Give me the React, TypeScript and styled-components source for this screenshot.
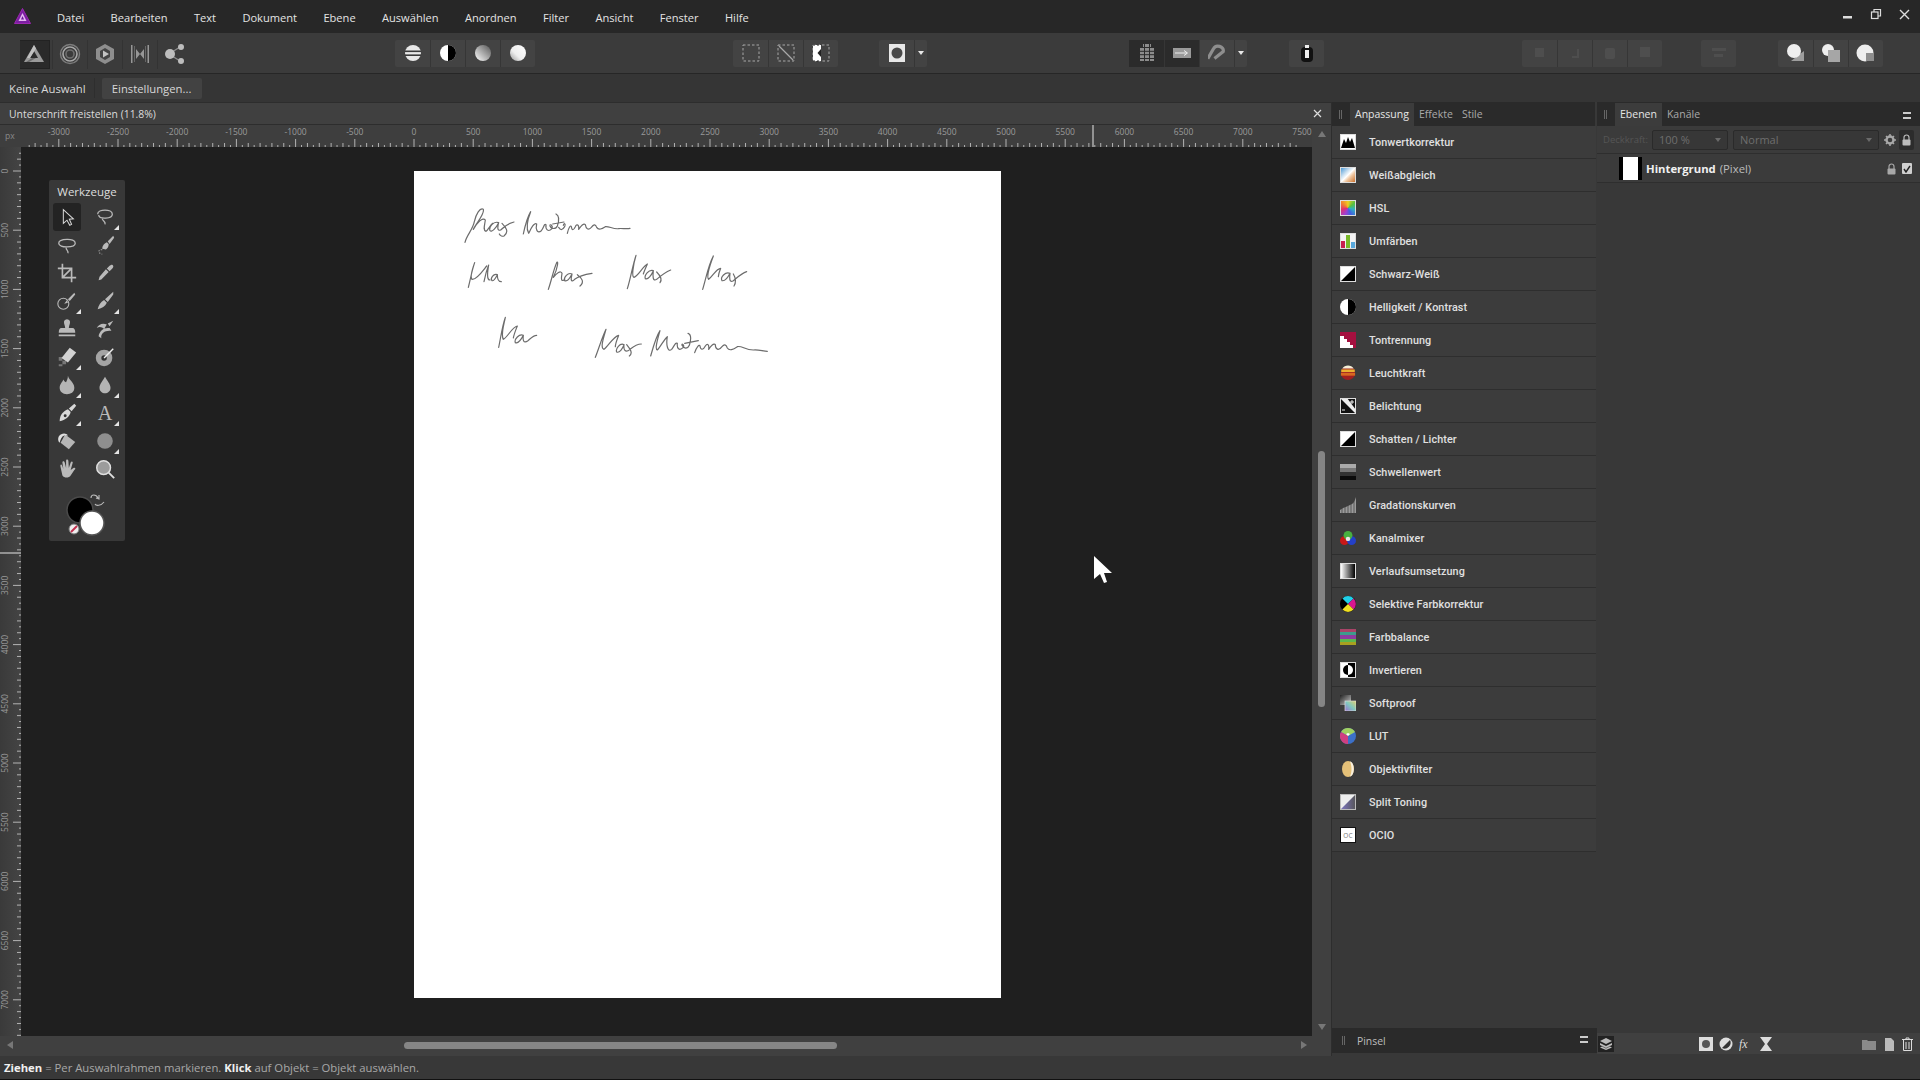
import React from 'react';
import styled, { createGlobalStyle } from 'styled-components';

const GlobalStyle = createGlobalStyle`
	html, body { margin: 0; padding: 0; background: #3a3a3a; overflow: hidden; }
	* { box-sizing: border-box; }
	#root { width: 1920px; height: 1080px; font-family: 'Open Sans', 'Noto Sans', sans-serif; }
`;

const Shell = styled.div`
	display: flex;
	flex-direction: column;
	width: 1920px;
	height: 1080px;
	color: #d8d8d8;
	font-size: 11.5px;
`;

const MenuBar = styled.div`
	display: flex;
	align-items: center;
	height: 33px;
	background: #272727;
	padding-left: 14px;
`;
const LogoWrap = styled.div`
	display: flex;
	width: 43px;
`;
const MenuItems = styled.div`
	display: flex;
	gap: 26.4px;
	padding-top: 1px;
	font-size: 11.1px;
	color: #e4e4e4;
`;
const WindowButtons = styled.div`
	display: flex;
	align-items: center;
	gap: 16px;
	margin-left: auto;
	padding-right: 9px;
	padding-bottom: 5px;
`;

const Toolbar = styled.div`
	display: flex;
	align-items: center;
	height: 41px;
	padding-left: 17px;
	background: #3b3b3b;
	border-bottom: 1px solid #262626;
`;
const Group = styled.div<{ $ml?: number }>`
	display: flex;
	height: 27px;
	margin-left: ${p => p.$ml || 0}px;
	background: #434343;
	border-radius: 2px;
`;
const PlainGroup = styled(Group)`
	background: transparent;
`;
const TBtn = styled.div<{ $state?: 'on' | 'sel'; $narrow?: boolean }>`
	display: flex;
	align-items: center;
	justify-content: center;
	width: ${p => (p.$narrow ? 13 : 35)}px;
	height: 100%;
	background: ${p => (p.$state === 'on' ? '#2b2b2b' : 'transparent')};
	border-left: 1px solid #363636;
	&:first-child { border-left: 0; }
`;
const PersonaBtn = styled.div<{ $active?: boolean }>`
	display: flex;
	align-items: center;
	justify-content: center;
	width: 35px;
	height: 29px;
	border-left: 1px solid #333;
	&:first-child { border-left: 0; }
	${p => p.$active && `
		background: #2a2a2a;
		border: 1px solid #222;
		width: 30px;
		margin: 0 2.5px;
	`}
`;
const Caret = styled.span`
	width: 0;
	height: 0;
	border-left: 3.5px solid transparent;
	border-right: 3.5px solid transparent;
	border-top: 4px solid #e8e8e8;
`;

const ContextBar = styled.div`
	display: flex;
	align-items: center;
	height: 28px;
	background: #353535;
	padding-left: 9px;
	font-size: 11.3px;
`;
const Divider = styled.div`
	width: 1px;
	height: 20px;
	background: #2e2e2e;
	margin: 0 7px 0 8px;
`;
const ContextButton = styled.div`
	display: flex;
	align-items: center;
	justify-content: center;
	width: 100px;
	height: 21px;
	background: #424242;
	border-radius: 2px;
`;

const Workspace = styled.div`
	display: flex;
	flex: 1;
	min-height: 0;
`;
const DocColumn = styled.div`
	display: flex;
	flex-direction: column;
	width: 1331px;
`;
const DocTab = styled.div`
	display: flex;
	align-items: center;
	justify-content: space-between;
	height: 23px;
	padding: 0 9px;
	background: #404040;
	border-top: 1px solid #2d2d2d;
	border-bottom: 1px solid #2d2d2d;
	font-size: 10.4px;
	color: #dcdcdc;
`;
const CenterRow = styled.div`
	display: flex;
	flex: 1;
	min-height: 0;
`;
const RulerColumn = styled.div`
	display: flex;
	flex-direction: column;
	width: 1312px;
`;
const HRuler = styled.svg`
	display: block;
	flex: none;
	background: #3e3e3e;
`;
const CanvasRow = styled.div`
	display: flex;
	flex: 1;
	min-height: 0;
`;
const VRuler = styled.svg`
	display: block;
	flex: none;
	background: linear-gradient(90deg, #3a3a3a, #444);
`;
const Canvas = styled.div`
	position: relative;
	flex: 1;
	padding: 24px 0 0 393px;
	background: #1f1f1f;
	overflow: hidden;
`;
const Page = styled.div`
	width: 587px;
	height: 827px;
	padding: 19px 0 0 26px;
	background: #fff;
`;
const Signatures = styled.svg`
	display: block;
	filter: blur(0.4px);
`;
const Pointer = styled.svg`
	position: absolute;
	left: 1072px;
	top: 408px;
`;

const ToolsPanel = styled.div`
	position: absolute;
	left: 28px;
	top: 33px;
	width: 76px;
	height: 361px;
	background: #383838;
	border-radius: 2px;
`;
const ToolsTitle = styled.div`
	display: flex;
	align-items: center;
	justify-content: center;
	height: 22px;
	font-size: 11.5px;
	color: #dedede;
`;
const ToolGrid = styled.div`
	display: grid;
	grid-template-columns: 38px 38px;
	grid-auto-rows: 28px;
	margin-top: 1px;
`;
const Tool = styled.div<{ $sel?: boolean; $more?: boolean }>`
	position: relative;
	display: flex;
	align-items: center;
	justify-content: center;
	width: 28px;
	height: 28px;
	margin-left: 4px;
	border-radius: 3px;
	background: ${p => (p.$sel ? '#232323' : 'transparent')};
	&::after {
		content: '';
		display: ${p => (p.$more ? 'block' : 'none')};
		position: absolute;
		right: 0;
		bottom: 1px;
		border-left: 5px solid transparent;
		border-bottom: 5px solid #e4e4e4;
	}
`;

const VScroll = styled.div`
	display: flex;
	flex-direction: column;
	align-items: center;
	width: 19px;
	padding-top: 6px;
	background: #404040;
`;
const VThumb = styled.div`
	width: 7px;
	height: 256px;
	margin-top: 314px;
	border-radius: 4px;
	background: #858585;
`;
const DownArrow = styled.div`
	margin-top: 317px;
	border-left: 4px solid transparent;
	border-right: 4px solid transparent;
	border-top: 6px solid #777;
`;
const UpArrow = styled.div`
	border-left: 4px solid transparent;
	border-right: 4px solid transparent;
	border-bottom: 6px solid #777;
`;
const HScroll = styled.div`
	display: flex;
	align-items: center;
	height: 20px;
	padding: 0 0 2px 7px;
	background: #404040;
`;
const LeftArrow = styled.div`
	border-top: 4px solid transparent;
	border-bottom: 4px solid transparent;
	border-right: 6px solid #777;
`;
const RightArrow = styled.div`
	margin-left: 464px;
	border-top: 4px solid transparent;
	border-bottom: 4px solid transparent;
	border-left: 6px solid #777;
`;
const HThumb = styled.div`
	width: 433px;
	height: 7px;
	margin-left: 391px;
	border-radius: 4px;
	background: #858585;
`;

const SidePanels = styled.div`
	display: flex;
	flex: 1;
	background: #383838;
	border-left: 1px solid #2d2d2d;
`;
const AdjustColumn = styled.div`
	display: flex;
	flex-direction: column;
	width: 265px;
	padding-bottom: 3px;
`;
const LayersColumn = styled.div`
	display: flex;
	flex-direction: column;
	flex: 1;
	padding-bottom: 2px;
`;
const TabBar = styled.div<{ $mr?: number }>`
	display: flex;
	align-items: flex-end;
	height: 24px;
	background: #2a2a2a;
	padding-left: 7px;
	margin-right: ${p => p.$mr || 0}px;
	font-size: 10.5px;
	color: #a9a9a9;
`;
const Grip = styled.span`
	width: 3px;
	height: 9px;
	margin: 0 8px 7px 0;
	border-left: 1px solid #666;
	border-right: 1px solid #666;
`;
const Tab = styled.div<{ $on?: boolean }>`
	display: flex;
	align-items: center;
	height: 23px;
	padding: 0 ${p => (p.$on ? 5 : 4)}px 2px;
	margin-right: 1px;
	background: ${p => (p.$on ? '#3c3c3c' : 'transparent')};
	color: ${p => (p.$on ? '#e6e6e6' : '#a9a9a9')};
`;
const MenuGlyph = styled.div`
	margin-left: auto;
	margin-right: 9px;
	margin-bottom: 7px;
	width: 8px;
	height: 7px;
	border-top: 2px solid #ccc;
	border-bottom: 2px solid #ccc;
`;
const AdjustList = styled.div`
	display: flex;
	flex-direction: column;
	margin-right: 1px;
`;
const AdjustRow = styled.div`
	display: flex;
	align-items: center;
	height: 33px;
	padding-left: 8px;
	background: #3c3c3c;
	border-bottom: 1px solid #2e2e2e;
	font-family: Roboto, 'Open Sans', sans-serif;
	font-size: 10.8px;
	font-weight: 500;
	letter-spacing: 0.1px;
	color: #e0e0e0;
`;
const Swatch = styled.div<{ $bg: string; $round?: boolean; $plain?: boolean }>`
	width: 16px;
	height: 16px;
	background: ${p => p.$bg};
	border-radius: ${p => (p.$round ? '50%' : '0')};
	border: ${p => (p.$round || p.$plain ? 'none' : '1px solid #ddd')};
`;
const IconSlot = styled.div`
	display: flex;
	align-items: center;
	justify-content: center;
	width: 16px;
	height: 16px;
	margin-right: 13px;
`;
const BrushBar = styled.div`
	display: flex;
	align-items: center;
	height: 25px;
	margin-top: auto;
	padding-left: 10px;
	background: #2a2a2a;
	font-size: 10.4px;
	color: #bdbdbd;
`;
const BrushGrip = styled.span`
	width: 3px;
	height: 9px;
	margin-right: 12px;
	border-left: 1px solid #666;
	border-right: 1px solid #666;
`;
const BrushMenu = styled(MenuGlyph)`
	margin-bottom: 2px;
	margin-right: 9px;
`;

const OpacityRow = styled.div`
	display: flex;
	align-items: center;
	height: 28px;
	padding-left: 6px;
	border-bottom: 1px solid #2e2e2e;
	background: #3b3b3b;
`;
const DimLabel = styled.span`
	width: 49px;
	font-size: 9.5px;
	color: #555;
	white-space: nowrap;
	overflow: hidden;
`;
const SelectBox = styled.div<{ $w: number }>`
	display: flex;
	align-items: center;
	justify-content: space-between;
	width: ${p => p.$w}px;
	height: 20px;
	margin-right: 5px;
	padding: 0 6px;
	background: #373737;
	border: 1px solid #2a2a2a;
	border-radius: 2px;
	font-size: 11px;
	color: #6e6e6e;
`;
const DimCaret = styled(Caret)`
	border-top-color: #6a6a6a;
`;
const LockBox = styled.div`
	display: flex;
	align-items: center;
	justify-content: center;
	width: 15px;
	height: 20px;
	margin-left: 3px;
	background: #2c2c2c;
	border-radius: 2px;
`;
const LayerRow = styled.div`
	display: flex;
	align-items: center;
	height: 29px;
	padding: 1px 0 0 22px;
	background: #3b3b3b;
	border-bottom: 1px solid #2e2e2e;
	font-size: 11.3px;
	color: #bbb;
`;
const Thumb = styled.div`
	width: 23px;
	height: 23px;
	padding: 0 4px;
	margin-right: 4px;
	background: #000;
`;
const ThumbPage = styled.div`
	height: 100%;
	background: #fff;
`;
const LayerName = styled.b`
	color: #f0f0f0;
	font-weight: 700;
	margin-right: 4px;
`;
const LayerTools = styled.div`
	display: flex;
	align-items: center;
	gap: 6px;
	margin-left: auto;
	padding-right: 8px;
`;
const CheckBox = styled.div`
	display: flex;
	align-items: center;
	justify-content: center;
	width: 10px;
	height: 11px;
	background: #cfcfcf;
	border-radius: 1px;
`;
const LayerFooter = styled.div`
	display: flex;
	align-items: center;
	height: 21px;
	margin-top: auto;
	padding-left: 1px;
	background: #404040;
`;
const StackBox = styled.div`
	display: flex;
	align-items: center;
	justify-content: center;
	width: 16px;
	height: 16px;
	margin-right: 85px;
	background: #222;
`;
const FooterIcons = styled.div<{ $ml?: number }>`
	display: flex;
	align-items: center;
	gap: 6px;
	margin-left: ${p => p.$ml || 0}px;
`;
const StatusBar = styled.div`
	height: 24px;
	padding: 4px 0 0 4px;
	background: #383838;
	border-bottom: 1px solid #111;
	font-size: 11.3px;
	color: #a8a8a8;
`;
const StatusKey = styled.b`
	color: #f0f0f0;
`;

const MENU = ['Datei', 'Bearbeiten', 'Text', 'Dokument', 'Ebene', 'Auswählen', 'Anordnen', 'Filter', 'Ansicht', 'Fenster', 'Hilfe'];

const STEP = 59.2;

function TopRuler() {
	const ticks = [];
	for (let i = -65; i < 150; i++) {
		const x = 414 + (i * STEP) / 10;
		if (x < 22 || x > 1308) continue;
		const h = i % 10 === 0 ? 8 : i % 2 === 0 ? 4 : 2;
		ticks.push(<line key={i} x1={x} x2={x} y1={22} y2={22 - h} stroke='#d0d0d0' strokeWidth={0.8} />);
	}
	const labels = [];
	for (let n = -3000; n <= 7500; n += 500) {
		labels.push(
			<text key={n} x={414 + (n / 500) * STEP} y={10} textAnchor='middle' fontSize={8.5} fill='#9a9a9a' fontFamily='Open Sans'>
				{n}
			</text>
		);
	}
	return (
		<HRuler width={1312} height={22}>
			<text x={5} y={14} fontSize={8.5} fill='#8a8a8a' fontFamily='Open Sans'>
				px
			</text>
			{ticks}
			{labels}
			<line x1={1093} x2={1093} y1={0} y2={22} stroke='#e6e6e6' strokeWidth={1} />
		</HRuler>
	);
}

function LeftRuler() {
	const ticks = [];
	for (let i = -3; i < 150; i++) {
		const y = 24 + (i * STEP) / 10;
		const w = i % 10 === 0 ? 8 : i % 2 === 0 ? 4 : 2;
		ticks.push(<line key={i} x1={21} x2={21 - w} y1={y} y2={y} stroke='#d0d0d0' strokeWidth={0.8} />);
	}
	const labels = [];
	for (let n = 0; n <= 7000; n += 500) {
		const y = 24 + (n / 500) * STEP;
		labels.push(
			<text key={n} x={8} y={y} textAnchor='middle' fontSize={8.5} fill='#9a9a9a' fontFamily='Open Sans' transform={`rotate(-90 8 ${y})`}>
				{n}
			</text>
		);
	}
	return (
		<VRuler width={21} height={889}>
			{ticks}
			{labels}
			<line x1={0} x2={21} y1={406} y2={406} stroke='#e6e6e6' strokeWidth={1} />
		</VRuler>
	);
}

function Logo() {
	return (
		<svg width={17} height={17} viewBox='0 0 17 17'>
			<path d='M8.5 0.5 L16.5 15.5 L0.5 15.5 Z' fill='#7b1fa2' stroke='#9c27b0' />
			<path d='M8.5 5 L12.5 13 L4.5 13 Z' fill='#e6b8f2' />
			<path d='M8.5 8 L10 11.5 L7 11.5 Z' fill='#6a1b9a' />
		</svg>
	);
}

function WinControls() {
	return (
		<WindowButtons>
			<svg width={13} height={12} viewBox='0 0 13 12'>
				<rect x={2} y={8} width={9} height={2.5} fill='#ddd' />
			</svg>
			<svg width={12} height={12} viewBox='0 0 12 12' fill='none' stroke='#ddd' strokeWidth={1.2}>
				<rect x={1.5} y={4} width={6.5} height={6.5} />
				<path d='M4 4 V1.5 H10.5 V8 H8' />
			</svg>
			<svg width={13} height={13} viewBox='0 0 13 13' stroke='#ddd' strokeWidth={1.4}>
				<path d='M2 2 L11 11 M11 2 L2 11' />
			</svg>
		</WindowButtons>
	);
}

const PERSONAS = [
	<svg key='p' width={22} height={22} viewBox='0 0 22 22'>
		<path d='M11 2 L21 19 H1 Z' fill='#9a9a9a' />
		<path d='M11 8 L15 15 H7 Z' fill='#2a2a2a' />
		<path d='M3 19 L9 15 H13 L6 19 Z' fill='#6d6d6d' />
		<path d='M11 2 L13 5.5 L7 15 L4 15 Z' fill='#c0c0c0' />
	</svg>,
	<svg key='l' width={22} height={22} viewBox='0 0 22 22' fill='none'>
		<circle cx={11} cy={11} r={9.5} stroke='#7d7d7d' strokeWidth={1.4} />
		<circle cx={11} cy={11} r={7} stroke='#a8a8a8' strokeWidth={1.6} />
		<circle cx={11} cy={11} r={4} stroke='#6f6f6f' strokeWidth={1.6} />
	</svg>,
	<svg key='d' width={22} height={22} viewBox='0 0 22 22'>
		<path d='M11 1 L20 6 V16 L11 21 L2 16 V6 Z' fill='#8e8e8e' />
		<path d='M11 5 L16 8 V14 L11 17 L6 14 V8 Z' fill='#444' />
		<path d='M9 7.5 L15 11 L9 14.5 Z' fill='#c4c4c4' />
	</svg>,
	<svg key='t' width={22} height={22} viewBox='0 0 22 22' fill='#979797'>
		<rect x={2} y={2} width={1.5} height={18} />
		<rect x={18.5} y={2} width={1.5} height={18} />
		<rect x={5} y={3} width={1} height={16} fill='#666' />
		<rect x={16} y={3} width={1} height={16} fill='#666' />
		<path d='M7 6 L11 11 L7 16 Z M15 6 L11 11 L15 16 Z' />
	</svg>,
	<svg key='e' width={22} height={22} viewBox='0 0 22 22' fill='#bdbdbd'>
		<path d='M5 11 L16 4 M5 11 L16 18' stroke='#8c8c8c' strokeWidth={1.4} />
		<circle cx={6} cy={11} r={5} />
		<circle cx={17} cy={4} r={3} />
		<circle cx={17} cy={18} r={3} />
	</svg>
];

function Circle({ fill, children }: { fill: string; children?: React.ReactNode }) {
	return (
		<svg width={18} height={18} viewBox='0 0 18 18'>
			<defs>
				<linearGradient id='gm' x1='1' y1='0' x2='0' y2='1'>
					<stop offset='0' stopColor='#555' />
					<stop offset='1' stopColor='#fff' />
				</linearGradient>
				<linearGradient id='gl' x1='1' y1='0' x2='0' y2='1'>
					<stop offset='0' stopColor='#fff' />
					<stop offset='0.6' stopColor='#eee' />
					<stop offset='1' stopColor='#999' />
				</linearGradient>
			</defs>
			<circle cx={9} cy={9} r={8} fill={fill} />
			{children}
		</svg>
	);
}

function DashBox({ children }: { children?: React.ReactNode }) {
	return (
		<svg width={18} height={20} viewBox='0 0 18 20' fill='none'>
			<rect x={1} y={2} width={16} height={16} stroke='#a8a8a8' strokeDasharray='2.5 2' />
			{children}
		</svg>
	);
}

function Shapes({ a, b }: { a: React.ReactNode; b: React.ReactNode }) {
	return (
		<svg width={20} height={20} viewBox='0 0 20 20'>
			{b}
			{a}
		</svg>
	);
}

function Dim({ children }: { children: React.ReactNode }) {
	return (
		<svg width={16} height={16} viewBox='0 0 16 16' fill='#4e4e4e'>
			{children}
		</svg>
	);
}

function Tone() {
	return (
		<>
			<Group $ml={203}>
				<TBtn>
					<Circle fill='#e8e8e8'>
						<rect x={1} y={6.5} width={16} height={1.6} fill='#3a3a3a' />
						<rect x={1} y={10.4} width={16} height={1.6} fill='#3a3a3a' />
					</Circle>
				</TBtn>
				<TBtn>
					<Circle fill='#fff'>
						<path d='M9 1 A8 8 0 0 1 9 17 Z' fill='#000' />
					</Circle>
				</TBtn>
				<TBtn>
					<Circle fill='url(#gm)' />
				</TBtn>
				<TBtn>
					<Circle fill='url(#gl)' />
				</TBtn>
			</Group>
			<Group $ml={198}>
				<TBtn>
					<DashBox />
				</TBtn>
				<TBtn>
					<DashBox>
						<path d='M2 3 L16 17' stroke='#a8a8a8' strokeWidth={1.2} />
					</DashBox>
				</TBtn>
				<TBtn>
					<DashBox>
						<rect x={1} y={2} width={8} height={16} fill='#fff' />
						<path d='M9 6 L5.5 10 L9 14 Z' fill='#222' />
						<path d='M1 2 h2 M5 2 h2 M1 18 h2 M5 18 h2' stroke='#222' />
					</DashBox>
				</TBtn>
			</Group>
			<Group $ml={41}>
				<TBtn>
					<svg width={16} height={18} viewBox='0 0 16 18'>
						<rect width={16} height={18} fill='#e8e8e8' />
						<circle cx={8} cy={9} r={5.5} fill='#4a4a4a' />
					</svg>
				</TBtn>
				<TBtn $narrow>
					<Caret />
				</TBtn>
			</Group>
			<Group $ml={202}>
				<TBtn $state='on'>
					<svg width={16} height={20} viewBox='0 0 16 20' fill='#8c8c8c'>
						<path d='M4 1 h8 v3 h-8 z M1 5 h14 v10 h-14 z M1 16 h14 v2 h-14 z' />
						<path d='M5.5 1 v17 M10.5 1 v17 M1 8.3 h14 M1 11.7 h14' stroke='#2b2b2b' />
					</svg>
				</TBtn>
				<TBtn $state='on'>
					<svg width={18} height={10} viewBox='0 0 18 10'>
						<rect width={18} height={10} fill='#9a9a9a' />
						<path d='M2 5 H14 M11 2.5 L14.5 5 L11 7.5' stroke='#eee' fill='none' />
					</svg>
				</TBtn>
				<TBtn>
					<svg width={18} height={22} viewBox='0 0 18 22' fill='none'>
						<path d='M3 20 L4 9 C4 3 13 2 14 7 L9 17' stroke='#8e8e8e' strokeWidth={3.2} transform='rotate(25 9 11)' />
					</svg>
				</TBtn>
				<TBtn $narrow>
					<Caret />
				</TBtn>
			</Group>
			<Group $ml={42}>
				<TBtn>
					<svg width={14} height={20} viewBox='0 0 14 20'>
						<rect x={1} y={4} width={12} height={15} rx={4} fill='#111' />
						<rect x={5} y={7} width={4} height={8} fill='#eee' />
						<rect x={5} y={2} width={4} height={3} fill='#eee' />
					</svg>
				</TBtn>
			</Group>
			<Group $ml={198}>
				<TBtn>
					<Dim>
						<rect x={3} y={3} width={9} height={9} />
					</Dim>
				</TBtn>
				<TBtn>
					<Dim>
						<path d='M10 4 h2 v9 h-7 v-2 h5 z' />
					</Dim>
				</TBtn>
				<TBtn>
					<Dim>
						<rect x={3} y={3} width={10} height={11} rx={2} />
					</Dim>
				</TBtn>
				<TBtn>
					<Dim>
						<rect x={3} y={2} width={10} height={10} />
					</Dim>
				</TBtn>
			</Group>
			<Group $ml={39}>
				<TBtn>
					<Dim>
						<path d='M1 3 h14 v3 h-14 z M3 9 h9 v3 h-9 z' />
					</Dim>
				</TBtn>
			</Group>
			<Group $ml={42}>
				<TBtn>
					<Shapes
						a={<circle cx={8} cy={8} r={7} fill='#eee' />}
						b={<path d='M5 18 L18 18 L18 8 Z' fill='#9d9d9d' />}
					/>
				</TBtn>
				<TBtn>
					<Shapes
						a={<rect x={7} y={7} width={12} height={12} fill='#a6a6a6' />}
						b={<circle cx={7} cy={7} r={6} fill='#eee' />}
					/>
				</TBtn>
				<TBtn>
					<Shapes
						a={<path d='M10 10 H18 V18 H10 Z' fill='#8e8e8e' />}
						b={<circle cx={9} cy={10} r={8.5} fill='#eee' />}
					/>
				</TBtn>
			</Group>
		</>
	);
}

const T = '#bababa';
const TOOLS: { icon: React.ReactNode; more?: boolean; sel?: boolean }[] = [
	{ sel: true, icon: <path d='M8 4 L8 19 L12 15.5 L15 21 L17 20 L14.5 14.5 L19 14 Z' fill='#222' stroke='#d8d8d8' strokeWidth={1.1} /> },
	{ more: true, icon: <path d='M4 9 C4 3 20 3 20 9 C20 14 6 15 5 10 M9 14 C10 17 13 17 12 20' fill='none' stroke={T} strokeWidth={1.4} /> },
	{ icon: <path d='M3 10 C3 5 21 4 21 10 C21 15 3 16 3 10 M11 15 C11 18 14 18 13 21' fill='none' stroke={T} strokeWidth={1.4} /> },
	{ icon: <><path d='M21 2 L15 8 L17 11 L22 4 Z M14 9 C10 11 9 14 9 16 L13 17 C16 15 16 12 16 11 Z' fill={T} /><path d='M9 17 C4 17 4 21 9 22' fill='none' stroke='#999' strokeWidth={1.2} strokeDasharray='1.5 1.5' /></> },
	{ icon: <path d='M7 2 V17 H22 M2 7 H17 V22 M7 17 L17 7' fill='none' stroke={T} strokeWidth={1.8} /> },
	{ icon: <path d='M19 3 C21 3 22 5 20 7 L17 10 L14 7 L17 4 Z M13 8 L16 11 L8 19 L5 20 L6 16 Z' fill={T} /> },
	{ more: true, icon: <><circle cx={8} cy={15} r={6} fill='none' stroke={T} strokeWidth={1.2} /><path d='M20 3 L13 10 L15 12 L21 5 Z M12 11 L9 15 L13 14 Z' fill={T} /></> },
	{ more: true, icon: <path d='M21 2 L12 10 L15 13 L21 5 Z M11 11 C7 13 5 17 4 21 C9 20 12 18 14 14 Z' fill={T} /> },
	{ icon: <path d='M9 3 A3.5 3.5 0 0 1 15 3 C16 6 14 8 14 11 H18 C20 11 21 13 21 16 H3 C3 13 4 11 6 11 H10 C10 8 8 6 9 3 Z M3 18 H21 V20 H3 Z' fill={T} /> },
	{ icon: <path d='M21 3 L15 6 L17 9 Z M14 7 C9 5 5 7 3 11 C6 9 9 10 11 12 M8 22 C7 16 13 13 19 14 L17 11 C11 10 6 14 5 20 Z' fill={T} /> },
	{ more: true, icon: <><path d='M3 12 h4 v4 h-4 z M7 16 h4 v4 h-4 z M11 12 h2 v4 h-2 z M3 20 h4 v2 h-4 z' fill='#777' /><path d='M15 2 L22 7 L13 18 L6 13 Z' fill='#d2d2d2' /></> },
	{ icon: <><circle cx={11} cy={13} r={9} fill='#a4a4a4' /><circle cx={11} cy={13} r={3} fill='#333' /><path d='M11 13 L21 3' stroke='#eee' strokeWidth={1.6} /></> },
	{ more: true, icon: <path d='M13 2 C14 7 20 9 20 15 C20 20 16 22 12 22 C7 22 4 19 4 15 C4 11 7 9 8 6 C9 8 10 9 11 9 C12 7 13 5 13 2 Z' fill='#b4b4b4' /> },
	{ more: true, icon: <path d='M12 3 C14 7 18 11 18 15 C18 19 15 21 12 21 C9 21 6 19 6 15 C6 11 10 7 12 3 Z' fill='#b4b4b4' /> },
	{ more: true, icon: <><path d='M4 21 C4 14 8 10 13 8 L16 11 C15 16 10 20 4 21 Z' fill='#d8d8d8' /><path d='M14 7 L20 2 L22 4 L17 10 Z' fill='#d8d8d8' /><circle cx={10} cy={15} r={1.6} fill='#333' /></> },
	{ more: true, icon: <text x={12} y={20} textAnchor='middle' fontFamily='Liberation Serif, serif' fontSize={22} fill={T}>A</text> },
	{ icon: <><path d='M10 5 L21 13 L14 21 L5 14 Z' fill='#b6b6b6' /><path d='M3 7 C6 3 11 3 13 6 L9 6 C6 7 5 10 4 14 C2 12 2 9 3 7 Z' fill='#dedede' /></> },
	{ more: true, icon: <circle cx={12} cy={12} r={8.5} fill='#8e8e8e' /> },
	{ icon: <path d='M5 10 C4 7 6 6 7 9 L8 12 L7 5 C7 3 9 3 9.5 5 L11 11 L11 3 C11 1 13 1 13.5 3 L14 11 L16 5 C17 3 19 4 18 6 L16 13 L19 11 C21 10 22 12 20 13 L16 19 C14 22 9 22 7 19 Z' fill={T} /> },
	{ icon: <><circle cx={10.5} cy={10.5} r={7.5} fill='#9c9c9c' stroke='#e0e0e0' strokeWidth={1.6} /><path d='M16 16 L22 22' stroke='#e0e0e0' strokeWidth={2} /></> }
];

function ColorWell() {
	return (
		<svg width={76} height={58} viewBox='0 0 76 58'>
			<path d='M45 16 C45 12 50 12 52 16 M50 16 L53 17 L53 13 M58 20 C55 24 50 24 49 22' fill='none' stroke='#bbb' strokeWidth={1.1} transform='translate(-3 -1)' />
			<circle cx={31} cy={27} r={13} fill='#000' stroke='#4a4a4a' strokeWidth={1.5} />
			<circle cx={43} cy={40} r={12} fill='#fff' stroke='#555' strokeWidth={1.5} />
			<circle cx={25} cy={46} r={5} fill='#eee' stroke='#777' />
			<path d='M22 49 L28 43' stroke='#c2304f' strokeWidth={2} />
		</svg>
	);
}

const EDGE = '#ddd';
function Box({ children }: { children: React.ReactNode }) {
	return (
		<svg width={16} height={16} viewBox='0 0 16 16'>
			{children}
			<rect x={0.5} y={0.5} width={15} height={15} fill='none' stroke={EDGE} />
		</svg>
	);
}

const ADJUST: { name: string; icon: React.ReactNode }[] = [
	{ name: 'Tonwertkorrektur', icon: <Box><rect width={16} height={16} fill='#fff' /><path d='M1 14 L4 5 L6 9 L8 3 L10 8 L12 4 L15 14 Z' fill='#000' /></Box> },
	{ name: 'Weißabgleich', icon: <Swatch $bg='linear-gradient(135deg, #4d9ad6 0%, #cfe3f2 35%, #fff 50%, #f0c9a4 65%, #c9702c 100%)' /> },
	{ name: 'HSL', icon: <Swatch $bg='conic-gradient(#f0d020, #58c040, #30b0c0, #4060e0, #a040d0, #e03070, #f08030, #f0d020)' /> },
	{ name: 'Umfärben', icon: <Box><rect width={16} height={16} fill='#f4f4f4' /><rect x={1} y={8} width={4} height={7} fill='#c81e50' /><rect x={6} y={2} width={4} height={13} fill='#78b828' /><rect x={11} y={9} width={4} height={6} fill='#58a8dc' /></Box> },
	{ name: 'Schwarz-Weiß', icon: <Box><rect width={16} height={16} fill='#fff' /><path d='M16 0 V16 H0 Z' fill='#000' /></Box> },
	{ name: 'Helligkeit / Kontrast', icon: <svg width={16} height={16} viewBox='0 0 16 16'><circle cx={8} cy={8} r={8} fill='#fff' /><path d='M8 0 A8 8 0 0 1 8 16 Z' fill='#000' /></svg> },
	{ name: 'Tontrennung', icon: <svg width={16} height={16} viewBox='0 0 16 16'><rect width={16} height={16} fill='#fff' /><path d='M0 0 H16 V16 H13 V13 H10 V10 H7 V7 H4 V4 H0 Z' fill='#a5103f' /></svg> },
	{ name: 'Leuchtkraft', icon: <svg width={18} height={16} viewBox='0 0 18 16'><circle cx={9} cy={8} r={8} fill='#a02020' /><path d='M2.5 3 H15.5 A8 8 0 0 0 2.5 3 Z' fill='#f4f0d8' /><rect x={1.4} y={4} width={15.2} height={3} fill='#eab030' /><rect x={1} y={8} width={16} height={3} fill='#d86820' /></svg> },
	{ name: 'Belichtung', icon: <Box><rect width={16} height={16} fill='#111' /><path d='M0 0 H7 L16 12 V16 Z' fill='#eee' /><path d='M10 4 h4 M12 2 v4' stroke='#eee' /><path d='M2 12 h3' stroke='#eee' /></Box> },
	{ name: 'Schatten / Lichter', icon: <Box><rect width={16} height={16} fill='#fff' /><path d='M16 0 V16 H0 Z' fill='#000' /></Box> },
	{ name: 'Schwellenwert', icon: <Swatch $plain $bg='linear-gradient(180deg, #aaa 0 28%, #777 28% 52%, #333 52% 72%, #0c0c0c 72%)' /> },
	{ name: 'Gradationskurven', icon: <svg width={16} height={16} viewBox='0 0 16 16'><path d='M0 16 V13 C4 10 9 9 12 7 C14 6 15 3 16 0 V16 Z' fill='#9a9a9a' /><path d='M2 9 V16 M5 9 V16 M8 8 V16 M11 6 V16 M14 3 V16' stroke='#3c3c3c' strokeWidth={0.7} /></svg> },
	{ name: 'Kanalmixer', icon: <svg width={18} height={16} viewBox='0 0 18 16'><circle cx={5} cy={11} r={5} fill='#c81818' /><circle cx={13} cy={11} r={5} fill='#2440c8' /><circle cx={9} cy={5} r={5} fill='#48b040' /><circle cx={9} cy={9} r={2.5} fill='#e8e8e8' /></svg> },
	{ name: 'Verlaufsumsetzung', icon: <Swatch $bg='linear-gradient(90deg, #fff, #000)' /> },
	{ name: 'Selektive Farbkorrektur', icon: <svg width={16} height={16} viewBox='0 0 16 16'><circle cx={8} cy={8} r={8} fill='#000' /><path d='M8 8 L2.4 2.4 A8 8 0 0 1 13.6 2.4 Z' fill='#20d0e8' /><path d='M8 8 L13.6 2.4 A8 8 0 0 1 13.6 13.6 Z' fill='#d81890' /><path d='M8 8 L13.6 13.6 A8 8 0 0 1 2.4 13.6 Z' fill='#f0e020' /></svg> },
	{ name: 'Farbbalance', icon: <Swatch $plain $bg='linear-gradient(180deg, #a84468 0 20%, #3c9c8c 20% 40%, #8c3ca0 40% 60%, #5cb84c 60% 80%, #a8a020 80%)' /> },
	{ name: 'Invertieren', icon: <Box><rect width={16} height={16} fill='#fff' /><rect x={8} width={8} height={16} fill='#000' /><path d='M8 3 A5 5 0 0 0 8 13 Z' fill='#000' /><path d='M8 3 A5 5 0 0 1 8 13 Z' fill='#fff' /></Box> },
	{ name: 'Softproof', icon: <svg width={16} height={16} viewBox='0 0 16 16'><defs><linearGradient id='sp1' x1='0' y1='0' x2='1' y2='1'><stop offset='0' stopColor='#222' /><stop offset='1' stopColor='#ccc' /></linearGradient><linearGradient id='sp2' x1='0' y1='1' x2='1' y2='0'><stop offset='0' stopColor='#9a70d0' /><stop offset='0.5' stopColor='#80c8c0' /><stop offset='1' stopColor='#e0d070' /></linearGradient></defs><rect width={11} height={10} fill='url(#sp1)' /><rect x={5} y={6} width={11} height={10} fill='url(#sp2)' stroke='#ddd' strokeWidth={0.7} /></svg> },
	{ name: 'LUT', icon: <svg width={16} height={16} viewBox='0 0 16 16'><circle cx={8} cy={8} r={8} fill='#3c70c8' /><path d='M8 0 A8 8 0 0 1 15 4 L8 8 L1 4 A8 8 0 0 1 8 0 Z' fill='#a0d060' /><path d='M1 4 L8 8 V16 A8 8 0 0 1 1 4 Z' fill='#d04080' /><path d='M6 6 L8 8 L10 6 L8 5 Z' fill='#fff' /></svg> },
	{ name: 'Objektivfilter', icon: <svg width={14} height={16} viewBox='0 0 14 16'><ellipse cx={7} cy={8} rx={6} ry={8} fill='#e4c078' /><path d='M9 0.5 C14 1 14 15 9 15.5 C11 11 11 5 9 0.5 Z' fill='#f8f0e0' /></svg> },
	{ name: 'Split Toning', icon: <svg width={16} height={16} viewBox='0 0 16 16'><defs><linearGradient id='st' x1='0' y1='0' x2='1' y2='0'><stop offset='0' stopColor='#8078c8' /><stop offset='1' stopColor='#555' /></linearGradient></defs><rect width={16} height={16} fill='#eee' /><path d='M16 0 V16 H0 Z' fill='url(#st)' /><rect x={0.5} y={0.5} width={15} height={15} fill='none' stroke='#bbb' /></svg> },
	{ name: 'OCIO', icon: <svg width={16} height={16} viewBox='0 0 16 16'><rect x={0.5} y={0.5} width={15} height={15} fill='#fff' stroke='#111' /><text x={8} y={10.5} textAnchor='middle' fontSize={6.5} fill='#777' fontFamily='Open Sans'>OC</text></svg> }
];

function LockIcon({ fill }: { fill: string }) {
	return (
		<svg width={9} height={12} viewBox='0 0 9 12'>
			<path d='M2 6 V3.5 A2.5 2.5 0 0 1 7 3.5 V6' fill='none' stroke={fill} strokeWidth={1.2} />
			<rect x={0.5} y={5.5} width={8} height={6} rx={1} fill={fill} />
		</svg>
	);
}

function SignatureInk() {
	return (
		<Signatures width={360} height={190} viewBox='0 0 1080 570' fill='none' stroke='#6c6c6c' strokeWidth={3.6} strokeLinecap='round' strokeLinejoin='round'>
			<path d='M75 157 C80 135 98 120 103 95 C108 72 120 52 130 58 C135 72 108 100 100 118 C112 98 128 80 136 90 C134 105 128 122 138 124 C144 120 150 106 158 100 M176 98 C160 92 146 112 150 122 C156 128 168 114 176 98 C172 112 172 124 182 120 C192 110 205 100 222 96 M186 100 C198 112 208 126 192 138 C186 140 180 136 178 132' />
			<path d='M250 132 C255 108 262 82 272 65 C262 90 258 115 266 130 C272 118 282 96 290 102 C286 118 292 132 304 122 C312 112 312 100 318 104 C316 118 324 128 336 116 C340 106 328 100 330 108 C334 118 348 118 352 108 C358 90 356 76 348 72 M338 102 L372 96 M356 112 C362 122 368 120 374 110 C378 100 372 98 370 106 M382 130 C386 112 392 104 394 110 C396 122 400 122 406 110 C410 100 418 104 416 118 C422 110 430 98 436 104 C438 116 444 122 454 112 C460 104 466 100 470 112 C476 122 486 116 496 110 C506 108 520 118 535 116 C545 114 560 118 570 115' />
			<path d='M85 292 C92 265 96 240 104 218 C96 240 90 262 96 268 C110 270 130 240 140 228 M132 275 C136 255 142 235 146 225 C142 248 140 270 150 270 M172 254 C160 250 150 266 156 272 C162 274 168 262 172 254 C172 266 176 275 184 275' />
			<path d='M325 298 C335 270 340 240 350 218 C355 210 355 230 340 262 C350 250 362 240 366 250 C364 262 362 276 372 270 M396 252 C384 246 370 262 374 272 C382 276 390 264 396 252 C392 268 392 280 404 268 C416 258 430 254 456 250 M412 254 C426 264 434 276 420 288' />
			<path d='M562 296 C572 265 578 225 588 196 C578 230 575 260 582 262 C595 258 608 230 622 222 C618 232 612 244 610 252 M640 242 C626 238 612 256 616 266 C624 270 634 256 640 242 C638 258 638 276 650 268 C665 255 680 245 692 240 M650 246 C660 256 668 268 660 278' />
			<path d='M788 298 C798 265 805 225 820 198 C808 230 800 262 806 268 C818 258 830 235 842 235 C838 245 836 252 835 260 M870 250 C856 244 840 262 846 272 C854 274 864 262 870 250 C868 264 868 280 880 272 C892 262 905 250 920 245 M880 252 C888 264 888 280 882 288' />
			<path d='M176 472 C182 445 186 410 196 382 C190 412 182 435 190 448 C204 440 216 412 232 408 C228 418 222 432 220 444 M250 436 C238 430 222 448 226 458 C234 462 244 448 250 436 C248 450 250 462 264 452 C272 445 280 436 290 436' />
			<path d='M466 502 C475 480 485 445 498 418 C490 445 480 475 492 478 C505 468 520 440 536 436 C532 446 526 460 526 470 M552 464 C540 458 526 476 530 486 C538 490 548 476 552 464 C550 480 556 490 570 478 C580 470 592 462 604 462 M560 464 C570 476 580 490 568 498' />
			<path d='M632 498 C640 470 648 440 660 422 C652 450 644 478 652 480 C662 470 672 448 682 440 C678 460 682 490 695 478 C704 466 706 456 712 460 C710 476 718 484 730 472 C734 464 724 458 726 466 C732 478 744 476 748 466 C756 440 750 432 744 430 M734 460 L775 452 M764 488 C770 470 778 462 780 468 C782 482 790 480 796 468 C802 458 808 464 806 478 C812 468 822 458 826 464 C826 478 836 484 846 470 C852 462 858 462 862 474 C868 484 880 478 892 470 C905 466 915 480 940 480 C955 478 970 484 982 484' />
		</Signatures>
	);
}

export default function App() {
	return (
		<Shell>
			<GlobalStyle />
			<MenuBar>
				<LogoWrap>
					<Logo />
				</LogoWrap>
				<MenuItems>
					{MENU.map(m => (
						<span key={m}>{m}</span>
					))}
				</MenuItems>
				<WinControls />
			</MenuBar>
			<Toolbar>
				<PlainGroup>
					{PERSONAS.map((p, i) => (
						<PersonaBtn key={i} $active={i === 0}>
							{p}
						</PersonaBtn>
					))}
				</PlainGroup>
				<Tone />
			</Toolbar>
			<ContextBar>
				<span>Keine Auswahl</span>
				<Divider />
				<ContextButton>Einstellungen...</ContextButton>
			</ContextBar>
			<Workspace>
				<DocColumn>
					<DocTab>
						<span>Unterschrift freistellen (11.8%)</span>
						<svg width={9} height={9} viewBox='0 0 9 9' stroke='#ddd' strokeWidth={1.2}>
							<path d='M1 1 L8 8 M8 1 L1 8' />
						</svg>
					</DocTab>
					<CenterRow>
						<RulerColumn>
							<TopRuler />
							<CanvasRow>
								<LeftRuler />
								<Canvas>
									<Page>
										<SignatureInk />
									</Page>
									<ToolsPanel>
										<ToolsTitle>Werkzeuge</ToolsTitle>
										<ToolGrid>
											{TOOLS.map((t, i) => (
												<Tool key={i} $sel={t.sel} $more={t.more}>
													<svg width={22} height={22} viewBox='0 0 24 24'>
														{t.icon}
													</svg>
												</Tool>
											))}
										</ToolGrid>
										<ColorWell />
									</ToolsPanel>
									<Pointer width={22} height={30} viewBox='0 0 22 30'>
										<path d='M1 1 V24 L7 19 L11 28 L14 27 L11 18 L19 18 Z' fill='#fff' />
									</Pointer>
								</Canvas>
							</CanvasRow>
						</RulerColumn>
						<VScroll>
							<UpArrow />
							<VThumb />
							<DownArrow />
						</VScroll>
					</CenterRow>
					<HScroll>
						<LeftArrow />
						<HThumb />
						<RightArrow />
					</HScroll>
				</DocColumn>
				<SidePanels>
					<AdjustColumn>
						<TabBar $mr={2}>
							<Grip />
							<Tab $on>Anpassung</Tab>
							<Tab>Effekte</Tab>
							<Tab>Stile</Tab>
						</TabBar>
						<AdjustList>
							{ADJUST.map(a => (
								<AdjustRow key={a.name}>
									<IconSlot>{a.icon}</IconSlot>
									{a.name}
								</AdjustRow>
							))}
						</AdjustList>
						<BrushBar>
							<BrushGrip />
							Pinsel
							<BrushMenu />
						</BrushBar>
					</AdjustColumn>
					<LayersColumn>
						<TabBar>
							<Grip />
							<Tab $on>Ebenen</Tab>
							<Tab>Kanäle</Tab>
							<MenuGlyph />
						</TabBar>
						<OpacityRow>
							<DimLabel>Deckkraft:</DimLabel>
							<SelectBox $w={76}>
								100 %
								<DimCaret />
							</SelectBox>
							<SelectBox $w={146}>
								Normal
								<DimCaret />
							</SelectBox>
							<svg width={12} height={12} viewBox='0 0 12 12'>
								<circle cx={6} cy={6} r={3.5} fill='none' stroke='#a8a8a8' strokeWidth={2.4} />
								<path d='M6 0 V2 M6 10 V12 M0 6 H2 M10 6 H12 M2 2 L3 3 M9 9 L10 10 M10 2 L9 3 M2 10 L3 9' stroke='#a8a8a8' strokeWidth={1.5} />
							</svg>
							<LockBox>
								<LockIcon fill='#bbb' />
							</LockBox>
						</OpacityRow>
						<LayerRow>
							<Thumb>
								<ThumbPage />
							</Thumb>
							<LayerName>Hintergrund</LayerName> (Pixel)
							<LayerTools>
								<LockIcon fill='#a8a8a8' />
								<CheckBox>
									<svg width={8} height={8} viewBox='0 0 8 8' fill='none' stroke='#222' strokeWidth={1.4}>
										<path d='M1 4 L3 7 L7 1' />
									</svg>
								</CheckBox>
							</LayerTools>
						</LayerRow>
						<LayerFooter>
							<StackBox>
								<svg width={12} height={12} viewBox='0 0 12 12' fill='#bbb'>
									<path d='M6 0 L12 3 L6 6 L0 3 Z M0 5 L6 8 L12 5 V7 L6 10 L0 7 Z M2 8.5 L6 10.5 L10 8.5 L12 9.5 L6 12 L0 9.5 Z' />
								</svg>
							</StackBox>
							<FooterIcons>
								<svg width={14} height={14} viewBox='0 0 14 14'>
									<rect width={14} height={14} fill='#ddd' />
									<circle cx={7} cy={7} r={4} fill='#555' />
								</svg>
								<svg width={14} height={14} viewBox='0 0 14 14'>
									<circle cx={7} cy={7} r={6.5} fill='#ddd' />
									<path d='M11 3 A6 6 0 0 1 3 11 Z' fill='#333' />
								</svg>
								<svg width={14} height={14} viewBox='0 0 14 14'>
									<text x={0} y={11} fontSize={12} fontStyle='italic' fontFamily='Liberation Serif, serif' fill='#ddd'>
										fx
									</text>
								</svg>
								<svg width={14} height={14} viewBox='0 0 14 14' fill='#ddd'>
									<path d='M1 0 H13 L8 7 L13 14 H1 L6 7 Z' />
								</svg>
							</FooterIcons>
							<FooterIcons $ml={89}>
								<svg width={14} height={12} viewBox='0 0 14 12' fill='#8a8a8a'>
									<path d='M0 2 H5 L6 3 H14 V12 H0 Z' />
								</svg>
								<svg width={14} height={14} viewBox='0 0 14 14' fill='#bbb'>
									<path d='M3 1 H9 L12 4 V14 H3 Z' />
								</svg>
								<svg width={11} height={14} viewBox='0 0 11 14' fill='none' stroke='#ddd'>
									<path d='M0 2.5 H11 M4 2.5 V1 H7 V2.5 M1.5 3 V13.5 H9.5 V3 M4 5 V12 M7 5 V12' />
								</svg>
							</FooterIcons>
						</LayerFooter>
					</LayersColumn>
				</SidePanels>
			</Workspace>
			<StatusBar>
				<StatusKey>Ziehen</StatusKey> = Per Auswahlrahmen markieren. <StatusKey>Klick</StatusKey> auf Objekt = Objekt auswählen.
			</StatusBar>
		</Shell>
	);
}
